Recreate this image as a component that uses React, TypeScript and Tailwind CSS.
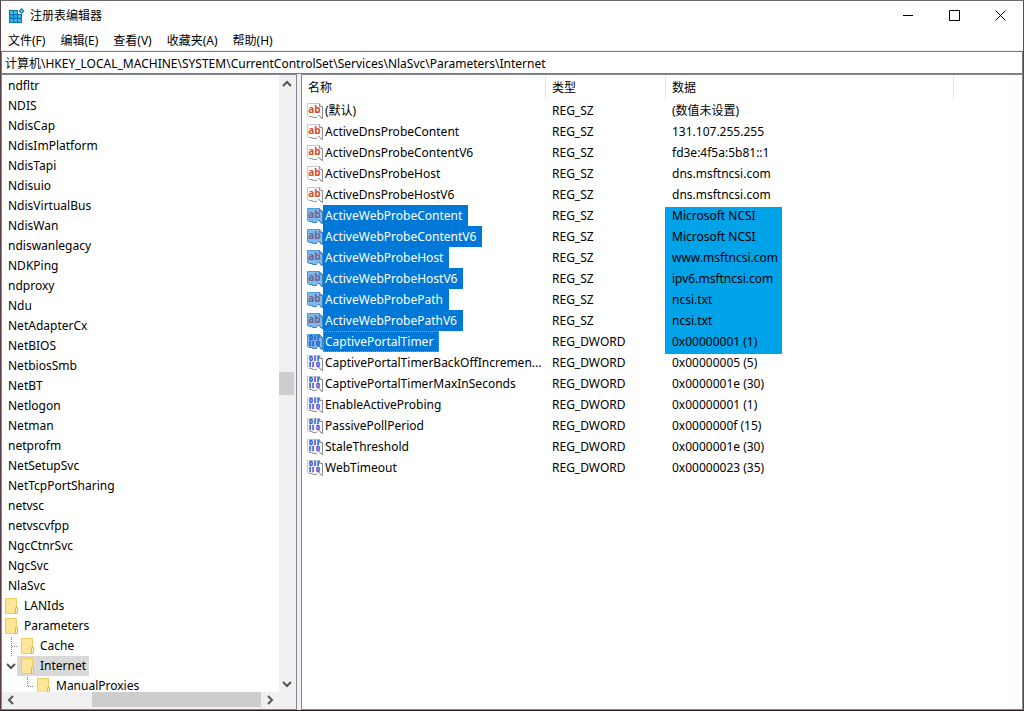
import { useState } from "react";

type ValueType = "REG_SZ" | "REG_DWORD";

interface RegistryValue {
  name: string;
  type: ValueType;
  data: string;
  selected?: boolean;
  focused?: boolean;
}

interface FolderNode {
  name: string;
  guide: "none" | "branch" | "expanded" | "leaf";
}

const menus = ["文件(F)", "编辑(E)", "查看(V)", "收藏夹(A)", "帮助(H)"];

const services = [
  "ndfltr",
  "NDIS",
  "NdisCap",
  "NdisImPlatform",
  "NdisTapi",
  "Ndisuio",
  "NdisVirtualBus",
  "NdisWan",
  "ndiswanlegacy",
  "NDKPing",
  "ndproxy",
  "Ndu",
  "NetAdapterCx",
  "NetBIOS",
  "NetbiosSmb",
  "NetBT",
  "Netlogon",
  "Netman",
  "netprofm",
  "NetSetupSvc",
  "NetTcpPortSharing",
  "netvsc",
  "netvscvfpp",
  "NgcCtnrSvc",
  "NgcSvc",
  "NlaSvc",
];

const folders: FolderNode[] = [
  { name: "LANIds", guide: "none" },
  { name: "Parameters", guide: "none" },
  { name: "Cache", guide: "branch" },
  { name: "Internet", guide: "expanded" },
  { name: "ManualProxies", guide: "leaf" },
];

const values: RegistryValue[] = [
  { name: "(默认)", type: "REG_SZ", data: "(数值未设置)" },
  { name: "ActiveDnsProbeContent", type: "REG_SZ", data: "131.107.255.255" },
  { name: "ActiveDnsProbeContentV6", type: "REG_SZ", data: "fd3e:4f5a:5b81::1" },
  { name: "ActiveDnsProbeHost", type: "REG_SZ", data: "dns.msftncsi.com" },
  { name: "ActiveDnsProbeHostV6", type: "REG_SZ", data: "dns.msftncsi.com" },
  { name: "ActiveWebProbeContent", type: "REG_SZ", data: "Microsoft NCSI", selected: true },
  { name: "ActiveWebProbeContentV6", type: "REG_SZ", data: "Microsoft NCSI", selected: true },
  { name: "ActiveWebProbeHost", type: "REG_SZ", data: "www.msftncsi.com", selected: true },
  { name: "ActiveWebProbeHostV6", type: "REG_SZ", data: "ipv6.msftncsi.com", selected: true },
  { name: "ActiveWebProbePath", type: "REG_SZ", data: "ncsi.txt", selected: true },
  { name: "ActiveWebProbePathV6", type: "REG_SZ", data: "ncsi.txt", selected: true },
  { name: "CaptivePortalTimer", type: "REG_DWORD", data: "0x00000001 (1)", selected: true, focused: true },
  { name: "CaptivePortalTimerBackOffIncremen...", type: "REG_DWORD", data: "0x00000005 (5)" },
  { name: "CaptivePortalTimerMaxInSeconds", type: "REG_DWORD", data: "0x0000001e (30)" },
  { name: "EnableActiveProbing", type: "REG_DWORD", data: "0x00000001 (1)" },
  { name: "PassivePollPeriod", type: "REG_DWORD", data: "0x0000000f (15)" },
  { name: "StaleThreshold", type: "REG_DWORD", data: "0x0000001e (30)" },
  { name: "WebTimeout", type: "REG_DWORD", data: "0x00000023 (35)" },
];

const firstSelected = values.findIndex((value) => value.selected);

function RegeditIcon() {
  return (
    <svg width="16" height="16" viewBox="0 0 16 16" aria-hidden="true">
      <path d="M0 2h9v4h4v9H0z" fill="#0b6fa8" />
      <path d="M1 3h3v3H1zM5 3h3v3H5z" fill="#3cc3f4" />
      <path d="M1 7h3v3H1zM5 7h3v3H5z" fill="#1fa9e4" />
      <path d="M9 7h3v3H9zM1 11h3v3H1zM5 11h3v3H5zM9 11h3v3H9z" fill="#2fb6ee" />
      <path d="M12.5 0L15.5 3L12.5 6L9.5 3z" fill="#0b6fa8" />
      <path d="M12.5 1.4L14.1 3L12.5 4.6L10.9 3z" fill="#5fd0f8" />
    </svg>
  );
}

function FolderIcon() {
  return (
    <svg width="16" height="16" viewBox="0 0 16 16" className="shrink-0" aria-hidden="true">
      <path d="M0.5 0.5h11v9h1v6H0.5z" fill="#ffe596" stroke="#eccb5c" />
      <path d="M10.5 9.5h2v5l-1 1h-1z" fill="#ffefb8" stroke="#e3b93c" />
    </svg>
  );
}

function ValueIcon({ type, selected }: { type: ValueType; selected?: boolean }) {
  const paper = selected ? "#7fb9ea" : "#ffffff";
  const edge = selected ? "#4c9ade" : "#c8c8c8";
  const shade = selected ? "#3a80bd" : "#8e8e8e";

  return (
    <svg width="16" height="16" viewBox="0 0 16 16" className="shrink-0" aria-hidden="true">
      <path
        d="M0.5 0.5H12.5L15.5 3.5V15.5L13.5 14.5L12.5 12.5H10.5L9.5 14.5H6.5L4.5 13.5H2.5L0.5 12.5z"
        fill={paper}
        stroke={edge}
      />
      <path
        d="M12.5 0.5V3.5H15.5V15.5L13.5 14.5L12.5 12.5M9.5 14.5H6.5L4.5 13.5H2.5"
        fill="none"
        stroke={shade}
      />
      {type === "REG_SZ" ? (
        <text
          x="7.5"
          y="10"
          textAnchor="middle"
          fontSize="10"
          fontWeight="700"
          fontFamily="Open Sans, sans-serif"
          fill={selected ? "#74618f" : "#d9482b"}
        >
          ab
        </text>
      ) : (
        <g
          fontSize="7"
          fontWeight="700"
          fontFamily="Liberation Sans, sans-serif"
          fill={selected ? "#1257cf" : "#2749d8"}
          stroke={selected ? "#1257cf" : "#2749d8"}
          strokeWidth="0.4"
        >
          <text x="2 7 10" y="6">0II</text>
          <text x="2 5 9" y="12">II0</text>
        </g>
      )}
    </svg>
  );
}

function Chevron({ direction }: { direction: "up" | "down" | "left" | "right" }) {
  const paths = {
    up: "M1 7L5 3L9 7",
    down: "M1 3L5 7L9 3",
    left: "M7 1L3 5L7 9",
    right: "M3 1L7 5L3 9",
  };
  return (
    <svg width="10" height="10" viewBox="0 0 10 10" aria-hidden="true">
      <path d={paths[direction]} fill="none" stroke="#555555" strokeWidth="2" />
    </svg>
  );
}

function TreeGuide({ guide }: { guide: FolderNode["guide"] }) {
  if (guide === "none") return null;

  if (guide === "expanded") {
    return (
      <span className="flex w-[15px] shrink-0 items-center justify-center pl-0.5">
        <Chevron direction="down" />
      </span>
    );
  }

  const leaf = guide === "leaf";
  return (
    <svg
      width={leaf ? 31 : 15}
      height="20"
      className="shrink-0"
      fill="none"
      stroke="#808080"
      strokeDasharray="1 1"
      aria-hidden="true"
    >
      <path d={leaf ? "M25.5 1V11M26 10.5H32" : "M9.5 1V20M10 10.5H16"} />
    </svg>
  );
}

function TitleBar() {
  const control = "flex w-[46px] items-center justify-center hover:bg-[#e5e5e5]";
  return (
    <header className="flex h-[29px] shrink-0 items-stretch justify-between">
      <div className="flex items-center gap-[5px] pl-2">
        <RegeditIcon />
        <h1>注册表编辑器</h1>
      </div>
      <div className="flex">
        <button type="button" aria-label="最小化" className={control}>
          <svg width="11" height="11" viewBox="0 0 11 11">
            <path d="M0 5.5H10" stroke="#000" />
          </svg>
        </button>
        <button type="button" aria-label="最大化" className={control}>
          <svg width="11" height="11" viewBox="0 0 11 11">
            <path d="M0.5 0.5H10.5V10.5H0.5z" fill="none" stroke="#000" />
          </svg>
        </button>
        <button type="button" aria-label="关闭" className={control}>
          <svg width="11" height="11" viewBox="0 0 11 11">
            <path d="M0.5 0.5L10.5 10.5M10.5 0.5L0.5 10.5" stroke="#000" />
          </svg>
        </button>
      </div>
    </header>
  );
}

function KeyTree() {
  const [current, setCurrent] = useState("Internet");
  const arrow = "flex size-[17px] shrink-0 items-center justify-center";

  return (
    <nav
      aria-label="注册表项"
      className="flex w-[296px] shrink-0 flex-col border border-[#828790] bg-white"
    >
      <div className="flex min-h-0 flex-1">
        <ul className="min-w-0 flex-1 overflow-hidden pt-px">
          {services.map((name) => (
            <li key={name} className="flex h-5 pl-1">
              <button
                type="button"
                onClick={() => setCurrent(name)}
                className={current === name ? "bg-[#d9d9d9] px-0.5" : "px-0.5"}
              >
                {name}
              </button>
            </li>
          ))}
          {folders.map(({ name, guide }) => (
            <li key={name} className="flex h-5">
              <TreeGuide guide={guide} />
              <button
                type="button"
                onClick={() => setCurrent(name)}
                className={`flex items-center gap-[3px] pr-[3px] ${
                  guide === "none" ? "pl-[3px]" : "pl-1"
                } ${current === name ? "bg-[#d9d9d9]" : ""}`}
              >
                <FolderIcon />
                {name}
              </button>
            </li>
          ))}
        </ul>
        <div className="flex w-[17px] shrink-0 flex-col items-center bg-[#f0f0f0] pr-0.5">
          <button type="button" aria-label="向上滚动" className={arrow}>
            <Chevron direction="up" />
          </button>
          <div className="flex w-full flex-1 flex-col justify-center">
            <div className="h-[23px] bg-[#cdcdcd]" />
          </div>
          <button type="button" aria-label="向下滚动" className={arrow}>
            <Chevron direction="down" />
          </button>
        </div>
      </div>
      <div className="flex h-[17px] shrink-0 items-center bg-[#f0f0f0] pr-[18px] pb-0.5">
        <button type="button" aria-label="向左滚动" className={arrow}>
          <Chevron direction="left" />
        </button>
        <div className="flex h-full flex-1 justify-end">
          <div className="h-full w-[70%] bg-[#cdcdcd]" />
        </div>
        <button type="button" aria-label="向右滚动" className={arrow}>
          <Chevron direction="right" />
        </button>
      </div>
    </nav>
  );
}

function ValueList() {
  const head = "border-r border-[#e5e5e5] pl-1.5 text-left font-normal";
  return (
    <main className="isolate min-w-0 flex-1 overflow-hidden border border-[#828790] bg-white">
      <table className="w-full table-fixed border-separate border-spacing-0">
        <colgroup>
          <col className="w-[244px]" />
          <col className="w-[120px]" />
          <col className="w-[288px]" />
          <col />
        </colgroup>
        <thead>
          <tr className="h-[25px]">
            <th scope="col" className={head}>名称</th>
            <th scope="col" className={head}>类型</th>
            <th scope="col" className={head}>数据</th>
            <td />
          </tr>
        </thead>
        <tbody>
          {values.map((value, index) => (
            <tr key={value.name} className="h-[21px] whitespace-nowrap">
              <td className="p-0">
                <div className="flex h-[21px] items-center pl-[5px]">
                  <ValueIcon type={value.type} selected={value.selected} />
                  <span
                    className={`flex h-full items-center pl-0.5 ${
                      value.selected ? "bg-[#0078d7] pr-1.5 text-white" : ""
                    } ${value.focused ? "outline-1 -outline-offset-1 outline-dotted outline-[#ff8728]" : ""}`}
                  >
                    {value.name}
                  </span>
                </div>
              </td>
              <td className="p-0 pl-1.5">{value.type}</td>
              <td className="relative p-0 pl-1.5">
                {/* marker block behind the data of the selected values */}
                {index === firstSelected && (
                  <span className="absolute top-0.5 -left-px -z-10 h-[147px] w-[117px] bg-[#00a2e8]" />
                )}
                {value.data}
              </td>
              <td />
            </tr>
          ))}
        </tbody>
      </table>
    </main>
  );
}

export default function App() {
  const [path, setPath] = useState(
    "计算机\\HKEY_LOCAL_MACHINE\\SYSTEM\\CurrentControlSet\\Services\\NlaSvc\\Parameters\\Internet"
  );

  return (
    <div className="flex h-screen flex-col overflow-hidden border border-t-[#6e6a6c] border-r-[#4a4e55] border-b-[#2a1c22] border-l-[#5a4048] bg-white font-['Noto_Sans','Noto_Sans_CJK_SC',sans-serif] text-xs text-black">
      <TitleBar />
      <div role="menubar" className="flex h-5 shrink-0 items-center gap-[15px] pt-0.5 pl-[7px]">
        {menus.map((menu) => (
          <button key={menu} type="button" role="menuitem">
            {menu}
          </button>
        ))}
      </div>
      <div className="shrink-0 bg-[#f0f0f0] pt-px">
        <input
          aria-label="地址"
          value={path}
          onChange={(event) => setPath(event.target.value)}
          className="block h-[23px] w-full border border-[#7a7a7a] bg-white px-[3px] outline-none"
        />
      </div>
      <div className="flex min-h-0 flex-1 gap-1 bg-[#f0f0f0]">
        <KeyTree />
        <ValueList />
      </div>
    </div>
  );
}
